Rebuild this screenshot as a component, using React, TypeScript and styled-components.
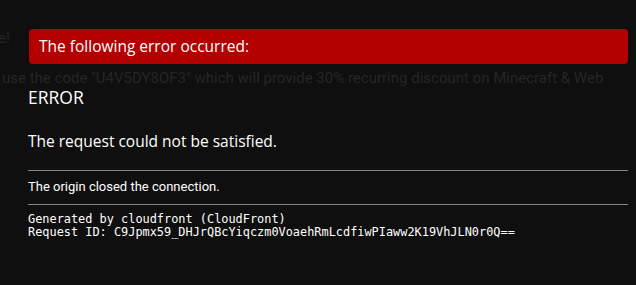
import React from "react";
import styled, { createGlobalStyle } from "styled-components";

const Global = createGlobalStyle`
  html, body { margin: 0; padding: 0; background: #0f0f0f; }
  body { width: 636px; height: 285px; overflow: hidden; }
`;

const Page = styled.div`
  display: grid;
  width: 636px;
  height: 285px;
  background: #0f0f0f;
  overflow: hidden;
`;

const Behind = styled.div`
  grid-area: 1 / 1;
  font-family: Roboto, "Noto Sans", sans-serif;
  font-size: 15px;
  color: #262626;
  padding-top: 29px;
  white-space: nowrap;
`;

const BehindLine = styled.div<{ $shift?: number; $gap?: number }>`
  line-height: 18px;
  margin-left: ${(p) => p.$shift ?? 0}px;
  margin-top: ${(p) => p.$gap ?? 0}px;
`;

const Dialog = styled.div`
  grid-area: 1 / 1;
  padding: 29px 8px 0 28px;
  font-family: "Open Sans", sans-serif;
  color: #ffffff;
`;

const TitleBar = styled.div`
  margin-left: 1px;
  height: 35px;
  line-height: 35px;
  padding-left: 10px;
  background: #b30000;
  border-radius: 4px;
  font-size: 15.5px;
`;

const Heading = styled.h1`
  margin: 21px 0 0;
  font-size: 17.5px;
  font-weight: 400;
  line-height: normal;
`;

const Lead = styled.h2`
  margin: 21px 0 0;
  font-size: 15.5px;
  font-weight: 400;
  line-height: normal;
`;

const Rule = styled.hr<{ $top: number }>`
  margin: ${(p) => p.$top}px 0 0;
  border: none;
  height: 1px;
  background: #858585;
`;

const Note = styled.p`
  margin: 8px 0 0;
  font-family: Roboto, sans-serif;
  font-size: 13px;
  line-height: normal;
`;

const Mono = styled.pre`
  margin: 8px 0 0;
  font-family: "DejaVu Sans Mono", "Liberation Mono", monospace;
  font-size: 11.9px;
  line-height: 13px;
  color: #ffffff;
`;

export default function App() {
  return (
    <>
      <Global />
      <Page>
        <Behind>
          <BehindLine $shift={-2}>e!</BehindLine>
          <BehindLine $shift={2} $gap={22}>
            use the code "U4V5DY8OF3" which will provide 30% recurring discount on Minecraft &amp; Web
          </BehindLine>
        </Behind>
        <Dialog>
          <TitleBar>The following error occurred:</TitleBar>
          <Heading>ERROR</Heading>
          <Lead>The request could not be satisfied.</Lead>
          <Rule $top={18} />
          <Note>The origin closed the connection.</Note>
          <Rule $top={10} />
          <Mono>
            {"Generated by cloudfront (CloudFront)\nRequest ID: C9Jpmx59_DHJrQBcYiqczm0VoaehRmLcdfiwPIaww2K19VhJLN0r0Q=="}
          </Mono>
        </Dialog>
      </Page>
    </>
  );
}
